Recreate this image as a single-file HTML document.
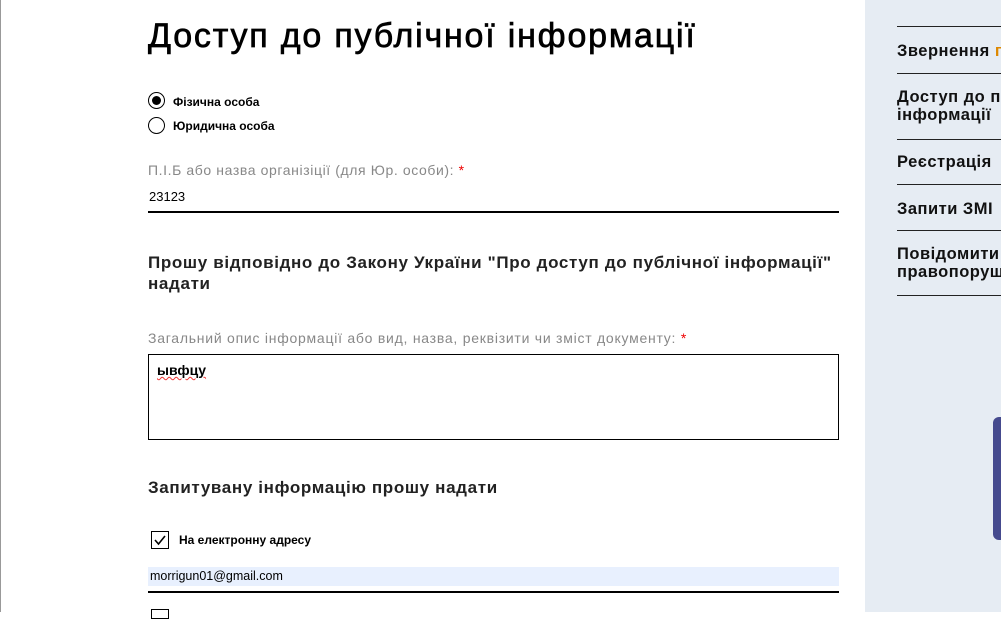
<!DOCTYPE html>
<html><head><meta charset="utf-8"><style>
body{margin:0;width:1001px;height:612px;overflow:hidden;background:#fff;font-family:"Liberation Sans",sans-serif;position:relative;color:#000}
.a{position:absolute;white-space:nowrap}
.side{position:absolute;left:865px;top:0;width:136px;height:612px;background:#e6ecf3}
.ln{position:absolute;left:897px;width:104px;height:1px;background:#222}
.si{position:absolute;left:897px;font-size:16.5px;font-weight:bold;color:#111;line-height:18px;letter-spacing:0.5px;white-space:nowrap}
.lab{color:#888;font-size:14px;letter-spacing:0.6px}
</style></head><body>
<div class="a" style="left:0;top:0;width:1px;height:612px;background:#999"></div>
<div class="a" style="left:148px;top:17px;font-size:34px;letter-spacing:1.8px;-webkit-text-stroke:0.7px #000">Доступ до публічної інформації</div>
<div class="a" style="left:148px;top:92px;width:17px;height:17px;border:1.5px solid #000;border-radius:50%;box-sizing:border-box"></div>
<div class="a" style="left:152px;top:96px;width:9px;height:9px;background:#000;border-radius:50%"></div>
<div class="a" style="left:173px;top:95px;font-size:12px;font-weight:bold">Фізична особа</div>
<div class="a" style="left:148px;top:117px;width:17px;height:17px;border:1.5px solid #000;border-radius:50%;box-sizing:border-box"></div>
<div class="a" style="left:173px;top:119px;font-size:12px;font-weight:bold">Юридична особа</div>
<div class="a lab" style="left:148px;top:162px">П.І.Б або назва організіції (для Юр. особи): <span style="color:#e00">*</span></div>
<div class="a" style="left:149px;top:189px;font-size:13px">23123</div>
<div class="a" style="left:148px;top:211px;width:691px;height:2px;background:#000"></div>
<div class="a" style="left:148px;top:252px;font-size:17px;font-weight:bold;line-height:21px;color:#222;letter-spacing:0.65px">Прошу відповідно до Закону України "Про доступ до публічної інформації"<br>надати</div>
<div class="a lab" style="left:148px;top:330px;letter-spacing:0.75px">Загальний опис інформації або вид, назва, реквізити чи зміст документу: <span style="color:#e00">*</span></div>
<div class="a" style="left:148px;top:354px;width:691px;height:86px;border:1px solid #000;box-sizing:border-box"></div>
<div class="a" style="left:157px;top:362px;font-size:14px;font-weight:bold;text-decoration:underline wavy #e33;text-decoration-thickness:1px">ывфцу</div>
<div class="a" style="left:148px;top:478px;font-size:17px;font-weight:bold;color:#222;letter-spacing:0.65px">Запитувану інформацію прошу надати</div>
<div class="a" style="left:151px;top:531px;width:18px;height:18px;border:1.5px solid #000;box-sizing:border-box"></div>
<svg class="a" style="left:151px;top:531px" width="18" height="18"><path d="M4 9l3.5 4L14 5" stroke="#000" stroke-width="1.6" fill="none"/></svg>
<div class="a" style="left:179px;top:533px;font-size:12px;font-weight:bold">На електронну адресу</div>
<div class="a" style="left:148px;top:567px;width:691px;height:19px;background:#e8f0fe"></div>
<div class="a" style="left:150px;top:569px;font-size:12.5px">morrigun01@gmail.com</div>
<div class="a" style="left:148px;top:591px;width:691px;height:2px;background:#000"></div>
<div class="a" style="left:151px;top:609px;width:18px;height:10px;border:1.5px solid #000;box-sizing:border-box"></div>
<div class="side"></div>
<div class="ln" style="top:26px"></div>
<div class="si" style="top:42px">Звернення <span style="color:#d80">г</span></div>
<div class="ln" style="top:73px"></div>
<div class="si" style="top:88px">Доступ до п<br>інформації</div>
<div class="ln" style="top:139px"></div>
<div class="si" style="top:153px">Реєстрація</div>
<div class="ln" style="top:184px"></div>
<div class="si" style="top:200px">Запити ЗМІ</div>
<div class="ln" style="top:230px"></div>
<div class="si" style="top:245px">Повідомити<br>правопоруш</div>
<div class="ln" style="top:295px"></div>
<div class="a" style="left:993px;top:417px;width:12px;height:123px;background:#454a8e;border-radius:6px 0 0 6px"></div>
</body></html>
